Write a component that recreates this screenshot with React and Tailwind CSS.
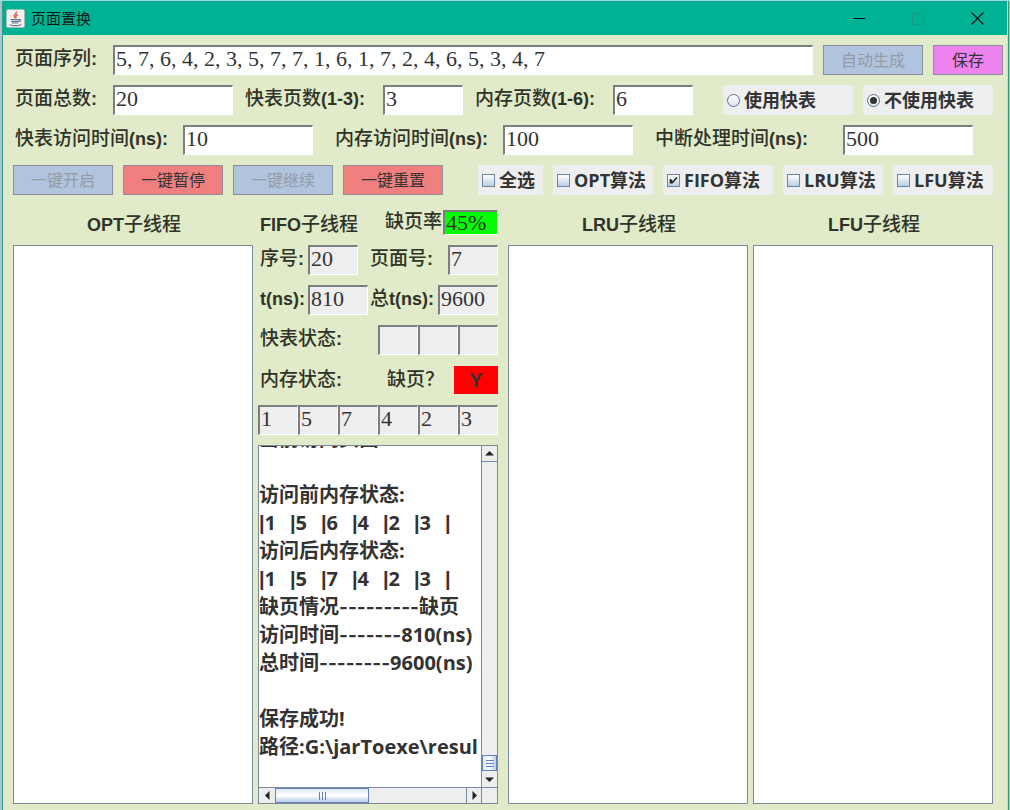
import React from "react";
import clsx from "clsx";

const UI_FONT = "font-['Open_Sans','Noto_Sans_CJK_SC',sans-serif]";
const FIELD_FONT = "font-['Liberation_Serif','Noto_Sans_CJK_SC',serif]";

const algorithms = [
  { id: "all", text: "全选", width: "w-[65px]" },
  { id: "opt", text: "OPT算法", width: "w-[100px]" },
  { id: "fifo", text: "FIFO算法", width: "w-[110px]", checked: true },
  { id: "lru", text: "LRU算法", width: "w-[100px]" },
  { id: "lfu", text: "LFU算法", width: "w-[100px]" },
];

const memoryPages = ["1", "5", "7", "4", "2", "3"];

const logLines = [
  "当前访问页面",
  "",
  "访问前内存状态:",
  "|1  |5  |6  |4  |2  |3  |",
  "访问后内存状态:",
  "|1  |5  |7  |4  |2  |3  |",
  "缺页情况---------缺页",
  "访问时间-------810(ns)",
  "总时间--------9600(ns)",
  "",
  "保存成功!",
  "路径:G:\\jarToexe\\resul",
  "",
];

// latin is bold Arial, the Chinese part is one pixel bigger and lighter
function MixedText({ text }) {
  return text.split(/([\x20-\x7e]+)/).map((part, i) =>
    i % 2 ? (
      <span key={i} className="text-[18px] font-bold">
        {part}
      </span>
    ) : (
      <span key={i} className="text-[19px] font-medium">
        {part}
      </span>
    )
  );
}

function Label({ text, htmlFor, className }) {
  return (
    <label
      htmlFor={htmlFor}
      className={clsx(
        "flex h-7 items-center whitespace-nowrap pl-[2px] leading-7 text-[#2f3328] font-['Liberation_Sans','Noto_Sans_CJK_SC',sans-serif]",
        className
      )}
    >
      <MixedText text={text} />
    </label>
  );
}

function Field({ id, value, className, readOnly, label }) {
  return (
    <input
      id={id}
      type="text"
      defaultValue={value}
      readOnly={readOnly}
      aria-label={label}
      className={clsx(
        "min-w-0 rounded-none border-t-2 border-l-2 border-r border-b border-t-[#7d7d7d] border-l-[#7d7d7d] border-r-white border-b-white pb-1 pl-[1px] text-[22px] leading-5 text-[#333] outline-none",
        FIELD_FONT,
        className
      )}
    />
  );
}

function Button({ children, className, disabled }) {
  return (
    <button
      type="button"
      disabled={disabled}
      className={clsx(
        "h-[30px] shrink-0 border border-[#8a8f98] text-[16px] leading-7",
        UI_FONT,
        disabled ? "bg-[#b0c4de] text-[#949ba5]" : "text-[#333]",
        className
      )}
    >
      {children}
    </button>
  );
}

function Check({ id, text, width, checked }) {
  return (
    <label
      htmlFor={id}
      className={clsx(
        "flex h-[30px] items-center gap-1 whitespace-nowrap bg-[#eeeeee] pl-1 text-[18px] font-bold text-[#333]",
        UI_FONT,
        width
      )}
    >
      <span className="relative flex">
        <input
          id={id}
          type="checkbox"
          defaultChecked={checked}
          className="peer size-[13px] appearance-none border border-[#6f87a5] bg-linear-to-b from-white to-[#b8cfe5]"
        />
        <svg
          viewBox="0 0 13 13"
          className="pointer-events-none absolute inset-0 hidden size-[13px] peer-checked:block"
        >
          <path d="M3.5 5v4.5M4.5 9.5V6M5 9l5-5.5" fill="none" stroke="#222" strokeWidth="1.5" />
        </svg>
      </span>
      {text}
    </label>
  );
}

function Radio({ id, text, checked }) {
  return (
    <label
      htmlFor={id}
      className={clsx(
        "flex h-[30px] w-[130px] items-center gap-1 whitespace-nowrap bg-[#eeeeee] pl-1 text-[18px] font-bold text-[#333]",
        UI_FONT
      )}
    >
      <span className="relative flex">
        <input
          id={id}
          type="radio"
          name="tlb"
          defaultChecked={checked}
          className="peer size-[13px] appearance-none rounded-full border border-[#5c6f88] bg-linear-to-b from-white to-[#dbe6f1]"
        />
        <span className="pointer-events-none absolute inset-[3px] hidden rounded-full bg-[#333] peer-checked:block" />
      </span>
      {text}
    </label>
  );
}

function JavaIcon() {
  return (
    <svg viewBox="0 0 19 19" className="size-[19px]">
      <rect x="0.5" y="0.5" width="18" height="18" rx="1.5" fill="#f2f1f1" stroke="#a9b8b4" />
      <path
        d="M10.5 2.5c.7 2-2.8 3-2.2 4.8.2.7.9 1.2 1 2.2M12 5.5c-2 .9-2.6 1.7-1.6 3.5"
        fill="none"
        stroke="#e0604a"
        strokeWidth="1.4"
      />
      <path
        d="M4.5 10.5h8.5M5 12.3h8M6 14h6M13 10.5c2.2-.3 2 2-.5 2.3M3.5 15.7c3 1.1 8.5 1.1 12-.2"
        fill="none"
        stroke="#5f788f"
        strokeWidth="1.2"
      />
    </svg>
  );
}

function TitleBar() {
  return (
    <header className="flex h-[34px] shrink-0 items-center justify-between border-t border-[#1f9c90] bg-[#00b294] pl-[3px] pr-[23px]">
      <div className="flex items-center gap-[6px]">
        <JavaIcon />
        <h1 className={clsx("text-[15px] text-[#0c1c18]", UI_FONT)}>页面置换</h1>
      </div>
      <div className="flex items-center gap-[46px]">
        <button type="button" aria-label="最小化">
          <svg viewBox="0 0 13 13" className="size-[13px]">
            <path d="M0.5 6.5h12" stroke="#111" />
          </svg>
        </button>
        <button type="button" aria-label="最大化" disabled>
          <svg viewBox="0 0 13 13" className="size-[13px]">
            <rect x="0.5" y="1.5" width="11" height="11" fill="none" stroke="#1a9a84" />
          </svg>
        </button>
        <button type="button" aria-label="关闭">
          <svg viewBox="0 0 13 13" className="size-[13px]">
            <path d="M0.5 0.5l12 12M12.5 0.5l-12 12" stroke="#111" strokeWidth="1.2" />
          </svg>
        </button>
      </div>
    </header>
  );
}

function Arrow({ d, className, label }) {
  return (
    <button
      type="button"
      aria-label={label}
      className={clsx("flex shrink-0 items-center justify-center bg-[#eeeeee]", className)}
    >
      <svg viewBox="0 0 9 9" className="size-[9px]">
        <path d={d} fill="#222" />
      </svg>
    </button>
  );
}

// dashes, bars and column gaps come from wider or narrower faces than the text
function logFont(part) {
  if (part.startsWith("-")) return "text-[19px] font-['Inter']";
  if (part === "|") return "font-['Liberation_Sans']";
  if (part === "  ") return "font-['DejaVu_Sans']";
  return undefined;
}

function LogLine({ text }) {
  return (
    <p className="h-7 shrink-0 last:h-[26px]">
      {text.split(/(-{2,}|\||\s{2})/).map((part, i) => (
        <span key={i} className={logFont(part)}>
          {part}
        </span>
      ))}
    </p>
  );
}

function LogArea() {
  return (
    <div className="flex min-h-0 flex-1 flex-col border border-[#7a8a99] bg-white">
      <div className="flex min-h-0 flex-1">
        <div
          role="log"
          className={clsx(
            "flex min-w-0 flex-1 flex-col justify-end overflow-hidden whitespace-pre text-[20px] font-bold leading-7 text-[#333]",
            UI_FONT
          )}
        >
          {logLines.map((line, i) => (
            <LogLine key={i} text={line} />
          ))}
        </div>
        <div className="flex w-4 shrink-0 flex-col border-l border-[#7a8a99] bg-[#eeeeee]">
          <Arrow label="上" d="M0 6.5L4.5 2L9 6.5z" className="h-4 border-b border-[#6f8fae]" />
          <div className="flex-1" />
          <div className="flex h-4 items-center justify-center border border-[#6382bf] bg-linear-to-r from-[#dce9f5] via-white to-[#b8cfe5]">
            <svg viewBox="0 0 8 7" className="h-[7px] w-2">
              <path d="M0 .5h8M0 3.5h8M0 6.5h8" stroke="#6382bf" />
            </svg>
          </div>
          <Arrow label="下" d="M0 2.5L4.5 7L9 2.5z" className="h-4" />
        </div>
      </div>
      <div className="flex h-4 shrink-0 border-t border-[#7a8a99] bg-[#eeeeee]">
        <Arrow label="左" d="M6.5 0L2 4.5L6.5 9z" className="w-4" />
        <div className="flex w-[94px] items-center justify-center border border-[#6382bf] bg-linear-to-b from-[#dce9f5] via-white to-[#b8cfe5]">
          <svg viewBox="0 0 7 8" className="h-2 w-[7px]">
            <path d="M.5 0v8M3.5 0v8M6.5 0v8" stroke="#6382bf" />
          </svg>
        </div>
        <div className="flex-1" />
        <Arrow label="右" d="M2.5 0L7 4.5L2.5 9z" className="w-4 border-x border-[#7a8a99]" />
        <div className="w-[15px]" />
      </div>
    </div>
  );
}

function ThreadPanel({ name }) {
  return (
    <section className="flex min-h-0 min-w-0 flex-col">
      <div className="flex h-10 shrink-0 justify-center pt-[6px]">
        <Label text={name + "子线程"} htmlFor={name} />
      </div>
      <textarea
        id={name}
        readOnly
        className="min-h-0 flex-1 resize-none border border-[#7a8a99] bg-white outline-none"
      />
    </section>
  );
}

function FifoPanel() {
  return (
    <section className="flex min-h-0 min-w-0 flex-col">
      <div className="flex h-10 shrink-0">
        <Label text="FIFO子线程" className="mt-[6px] flex-1" />
        <Label text="缺页率" htmlFor="rate" className="mt-[3px] pr-[1px]" />
        <Field id="rate" value="45%" readOnly className="mt-[5px] h-[25px] w-[55px] bg-[#00ff00] pb-0!" />
      </div>
      <div className="flex min-h-0 flex-1 flex-col gap-2.5">
        <div className="flex">
          <Label text="序号:" htmlFor="seq" className="w-[50px]" />
          <Field id="seq" value="20" readOnly className="h-[30px] w-[50px] bg-[#eeeeee]" />
          <Label text="页面号:" htmlFor="page" className="ml-2.5 flex-1" />
          <Field id="page" value="7" readOnly className="h-[30px] w-[50px] bg-[#eeeeee]" />
        </div>
        <div className="flex">
          <Label text="t(ns):" htmlFor="time" className="w-[50px]" />
          <Field id="time" value="810" readOnly className="h-[30px] w-[60px] bg-[#eeeeee]" />
          <Label text="总t(ns):" htmlFor="total" className="flex-1" />
          <Field id="total" value="9600" readOnly className="h-[30px] w-[60px] bg-[#eeeeee]" />
        </div>
        <div className="flex">
          <Label text="快表状态:" className="flex-1" />
          {[1, 2, 3].map((n) => (
            <Field key={n} value="" readOnly label={"快表" + n} className="h-[30px] w-10 bg-[#eeeeee]" />
          ))}
        </div>
        <div className="flex h-[30px] items-center">
          <Label text="内存状态:" className="flex-1" />
          <Label text="缺页？" className="pr-2.5" />
          <output className="flex h-7 w-11 items-center justify-center bg-[#ff0000] text-[20px] font-bold text-[#333] font-['Liberation_Sans',sans-serif]">
            Y
          </output>
        </div>
        <div className="flex">
          {memoryPages.map((page, i) => (
            <Field key={i} value={page} readOnly label={"内存" + (i + 1)} className="h-[30px] w-10 flex-1 bg-[#eeeeee]" />
          ))}
        </div>
        <LogArea />
      </div>
    </section>
  );
}

export default function App() {
  return (
    <div className="flex h-screen overflow-hidden border-t border-[#8fe3e0]">
      <div className="w-[3px] shrink-0 border-r border-[#2f9c8c] bg-[#a9c6cf]" />
      <div className="flex min-w-0 flex-1 flex-col bg-[#e1ebc9]">
        <TitleBar />
        <main className="flex min-h-0 flex-1 flex-col gap-2.5 pt-2.5 pb-[6px] pl-2.5">
          <div className="flex gap-2.5 pr-1">
            <div className="flex flex-1">
              <Label text="页面序列:" htmlFor="sequence" className="w-[100px] shrink-0" />
              <Field
                id="sequence"
                value="5, 7, 6, 4, 2, 3, 5, 7, 7, 1, 6, 1, 7, 2, 4, 6, 5, 3, 4, 7"
                className="h-[30px] flex-1 bg-white"
              />
            </div>
            <Button disabled className="w-[100px]">自动生成</Button>
            <Button className="w-[70px] bg-[#ee82ee]">保存</Button>
          </div>

          <div className="flex justify-between pr-3.5">
            <div className="flex gap-2.5">
              <div className="flex">
                <Label text="页面总数:" htmlFor="count" className="w-[100px]" />
                <Field id="count" value="20" className="h-[30px] w-[120px] bg-white" />
              </div>
              <div className="flex">
                <Label text="快表页数(1-3):" htmlFor="tlbSize" className="w-[140px]" />
                <Field id="tlbSize" value="3" className="h-[30px] w-20 bg-white" />
              </div>
              <div className="flex">
                <Label text="内存页数(1-6):" htmlFor="memSize" className="w-[140px]" />
                <Field id="memSize" value="6" className="h-[30px] w-20 bg-white" />
              </div>
            </div>
            <div className="flex gap-2.5">
              <Radio id="useTlb" text="使用快表" />
              <Radio id="noTlb" text="不使用快表" checked />
            </div>
          </div>

          <div className="flex gap-5">
            <div className="flex">
              <Label text="快表访问时间(ns):" htmlFor="tlbTime" className="w-[170px]" />
              <Field id="tlbTime" value="10" className="h-[30px] w-[130px] bg-white" />
            </div>
            <div className="flex">
              <Label text="内存访问时间(ns):" htmlFor="memTime" className="w-[170px]" />
              <Field id="memTime" value="100" className="h-[30px] w-[130px] bg-white" />
            </div>
            <div className="flex">
              <Label text="中断处理时间(ns):" htmlFor="intTime" className="w-[190px]" />
              <Field id="intTime" value="500" className="h-[30px] w-[130px] bg-white" />
            </div>
          </div>

          <div className="flex justify-between pr-3.5">
            <div className="flex gap-2.5">
              <Button disabled className="w-[100px]">一键开启</Button>
              <Button className="w-[100px] bg-[#f08080]">一键暂停</Button>
              <Button disabled className="w-[100px]">一键继续</Button>
              <Button className="w-[100px] bg-[#f08080]">一键重置</Button>
            </div>
            <div className="flex gap-2.5">
              {algorithms.map((a) => (
                <Check key={a.id} {...a} />
              ))}
            </div>
          </div>

          <div className="grid min-h-0 flex-1 grid-cols-2 grid-rows-1 gap-2.5 pr-3.5">
            <div className="grid min-h-0 grid-cols-2 grid-rows-1 gap-[5px]">
              <ThreadPanel name="OPT" />
              <FifoPanel />
            </div>
            <div className="grid min-h-0 grid-cols-2 grid-rows-1 gap-[5px]">
              <ThreadPanel name="LRU" />
              <ThreadPanel name="LFU" />
            </div>
          </div>
        </main>
      </div>
      <div className="flex w-[3px] shrink-0 border-l border-[#a5f0cc] bg-[#b4bbb5]">
        <div className="w-px bg-[#2f9c80]" />
      </div>
    </div>
  );
}
